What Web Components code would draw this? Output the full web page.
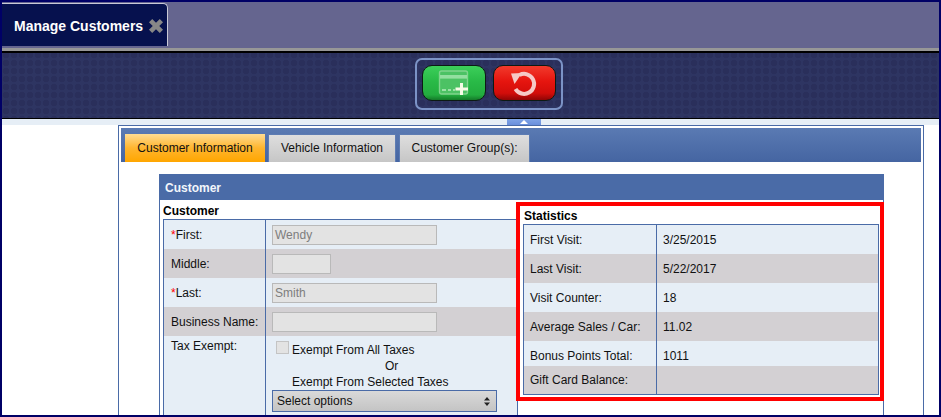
<!DOCTYPE html>
<html>
<head>
<meta charset="utf-8">
<title>Manage Customers</title>
<style>
  html, body { margin: 0; padding: 0; background: #fff; }
  body { font: 12px "Liberation Sans", Arial, sans-serif; color: #111; }
</style>
</head>
<body>
<script>
function shadowElement(name, html) {
  const template = document.createElement('template');
  template.innerHTML = html;
  customElements.define(name, class extends HTMLElement {
    constructor() {
      super();
      this.attachShadow({ mode: 'open' });
      this.shadowRoot.appendChild(template.content.cloneNode(true));
    }
  });
}

shadowElement('mc-window', `
  <style>
    :host {
      display: flex; flex-direction: column;
      width: 941px; height: 417px; box-sizing: border-box;
      border: 2px solid #000066; overflow: hidden; background: #fff;
    }
  </style>
  <slot></slot>
`);

shadowElement('mc-tabstrip', `
  <style>
    :host {
      display: block; flex: none; height: 46px; box-sizing: border-box;
      background: #65658f; padding-top: 1px;
    }
    .tab {
      display: flex; align-items: center; box-sizing: border-box;
      width: 166px; height: 43px; padding: 2px 0 0 12px;
      background: #06114e; color: #fff;
      font-weight: bold; font-size: 14px;
      border-top: 1px solid #c9c9d6; border-right: 1px solid #c9c9d6;
      border-top-right-radius: 5px;
    }
    svg { margin-left: 5px; flex: none; }
  </style>
  <div class="tab">
    <slot></slot>
    <svg width="16" height="16" viewBox="0 0 16 16"><path d="M2.6 2.6 L13.4 13.4 M13.4 2.6 L2.6 13.4" stroke="#878787" stroke-width="4.6" fill="none"/></svg>
  </div>
`);

shadowElement('mc-toolbar', `
  <style>
    :host {
      display: flex; flex: none; height: 71px; box-sizing: border-box;
      border-top: 3px solid #979797; 
      box-shadow: inset 0 1px 0 #000, inset 0 2px 0 #000;
      border-bottom: 1px solid #000;
      background-color: #2e3562;
      background-image: radial-gradient(circle at 4px 4px, #2a2f5b 3px, transparent 3.6px);
      background-size: 8px 8px;
      padding: 7px 0 0 413px;
    }
    .group {
      display: flex; gap: 7px; box-sizing: border-box;
      width: 148px; height: 52px; padding: 5px 5px;
      border: 2px solid #7c93c6; border-radius: 7px;
    }
  </style>
  <div class="group"><slot></slot></div>
`);

shadowElement('mc-button', `
  <style>
    :host {
      display: flex; align-items: center; justify-content: center;
      width: 64px; height: 36px; box-sizing: border-box;
      border: 1px solid #0c1a14; border-radius: 10px;
    }
    :host([kind="add"]) {
      background: linear-gradient(#3ccf5a 0, #29ba47 45%, #23ad3f 85%, #147a29 100%);
    }
    :host([kind="undo"]) {
      background: linear-gradient(#f23a2c 0, #e6150f 45%, #d20d0a 80%, #8f0505 100%);
    }
  </style>
  <slot></slot>
`);

shadowElement('mc-collapser', `
  <style>
    :host {
      display: block; flex: none; height: 6px; background: #e6eef6; padding-left: 505px;
    }
    .handle {
      display: flex; justify-content: center; width: 34px; height: 6px;
      background: linear-gradient(#7fa3e6, #6a8fdd);
    }
    svg { display: block; margin-top: 1px; }
  </style>
  <div class="handle"><svg width="8" height="4" viewBox="0 0 8 4"><path d="M0 4 L4 0 L8 4 Z" fill="#fff"/></svg></div>
`);

shadowElement('mc-panel', `
  <style>
    :host {
      display: block; flex: none; box-sizing: border-box;
      width: 806px; height: 300px; margin-left: 116px; padding: 2px;
      border: 1px solid #4a6ba7; border-bottom: 0;
    }
    .bar {
      display: flex; gap: 3px; align-items: flex-end; box-sizing: border-box;
      height: 34px; padding-left: 4px;
      background: linear-gradient(#5a7ab3, #4565a2);
    }
    .body { padding: 12px 0 0 38px; }
  </style>
  <div class="bar"><slot name="tabs"></slot></div>
  <div class="body"><slot></slot></div>
`);

shadowElement('mc-subtab', `
  <style>
    :host {
      display: flex; align-items: center; justify-content: center;
      box-sizing: border-box; height: 28px; padding-bottom: 2px;
      border: 1px solid #5d7cb3; border-bottom: 0;
      background: linear-gradient(#dedede, #c6c6c6);
      color: #111;
    }
    :host([active]) {
      border: 0; padding-bottom: 1px;
      background: linear-gradient(#ffdc92 0, #ffb52e 50%, #ffa600 100%);
    }
  </style>
  <slot></slot>
`);

shadowElement('mc-section', `
  <style>
    :host {
      display: block; box-sizing: border-box; width: 725px;
      border-left: 1px solid #4a6ba7; border-right: 1px solid #4a6ba7;
    }
    .head {
      height: 26px; margin: 0 -1px; padding-left: 6px;
      background: #4a6ba7; color: #f2f6fb;
      font-weight: bold; line-height: 28px;
    }
    .body { display: flex; align-items: flex-start; }
  </style>
  <div class="head"><slot name="title"></slot></div>
  <div class="body"><slot></slot></div>
`);

shadowElement('mc-group', `
  <style>
    :host { display: block; flex: none; box-sizing: border-box; width: 355px; margin-left: 3px; }
    .title { height: 19px; font-weight: bold; line-height: 23px; color: #000; }
  </style>
  <div class="title"><slot name="title"></slot></div>
  <slot></slot>
`);

shadowElement('mc-highlight', `
  <style>
    :host {
      display: block; flex: none; position: relative; box-sizing: border-box;
      width: 368px; height: 199px; margin: 2px 0 0 -2px; padding: 0 1px 0 3px;
      border: 4px solid #ff0000; background: #fff;
    }
    .title { height: 18px; padding-left: 1px; font-weight: bold; line-height: 20px; color: #000; }
  </style>
  <div class="title"><slot name="title"></slot></div>
  <slot></slot>
`);

shadowElement('mc-table', `
  <style>
    :host { display: block; box-sizing: border-box; border: 1px solid #4a6ba7; }
    :host([open-bottom]) { border-bottom: 0; }
  </style>
  <slot></slot>
`);

shadowElement('mc-row', `
  <style>
    :host {
      display: grid; grid-template-columns: var(--label-w) 1fr;
      height: var(--h, 29px); background: #e6eef6; color: #111;
    }
    :host([tone="gray"]) { background: #d3d0d3; }
    .label {
      display: flex; align-items: center; box-sizing: border-box;
      padding: var(--pt, 0) 0 0 var(--label-pad, 6px);
      border-right: 1px solid #4a6ba7;
    }
    .value {
      display: flex; align-items: center;
      padding: var(--pt, 0) 0 0 6px; min-width: 0;
    }
    :host([top]) .label { align-items: flex-start; padding-top: 3px; line-height: 14px; }
    :host([top]) .value { align-items: flex-start; }
  </style>
  <div class="label"><slot name="label"></slot></div>
  <div class="value"><slot></slot></div>
`);

shadowElement('mc-req', `<style>:host { display: inline; color: #ff0000; }</style>*`);

shadowElement('mc-field', `
  <style>
    :host {
      display: block; box-sizing: border-box; width: var(--w, 165px); height: 20px;
      padding-left: 2px; background: #e3e3e3; border: 1px solid #b9b9b9;
      color: #7d7d7d; line-height: 18px;
    }
  </style>
  <slot></slot>
`);

shadowElement('mc-tax-exempt', `
  <style>
    :host { display: block; padding-top: 6px; line-height: 16px; color: #111; }
    .all { display: flex; height: 16px; }
    .box {
      flex: none; box-sizing: border-box; width: 13px; height: 13px;
      margin: -1px 3px 0 4px;
      background: #e3e3e3; border: 1px solid #c4c4c4;
    }
    .or { padding-left: 113px; }
    .sel { padding-left: 20px; }
  </style>
  <div class="all"><div class="box"></div><span><slot name="all"></slot></span></div>
  <div class="or"><slot name="or"></slot></div>
  <div class="sel"><slot name="selected"></slot></div>
  <slot></slot>
`);

shadowElement('mc-select', `
  <style>
    :host {
      display: flex; align-items: center; justify-content: space-between;
      box-sizing: border-box; width: 225px; height: 22px;
      padding: 0 6px 0 4px; border: 1px solid #4a6ba7;
      background: linear-gradient(#d9d9d9, #c4c4c4); color: #111;
    }
    svg { display: block; }
  </style>
  <slot></slot>
  <svg width="6" height="9" viewBox="0 0 6 9"><path d="M3 0 L6 3.5 L0 3.5 Z M3 9 L0 5.5 L6 5.5 Z" fill="#222"/></svg>
`);
</script>

<mc-window>
  <mc-tabstrip>Manage Customers</mc-tabstrip>
  <mc-toolbar>
    <mc-button kind="add">
      <svg width="32" height="28" viewBox="0 0 32 28">
        <rect x="1.5" y="2" width="28" height="23" rx="2" fill="#4cc264" stroke="#80d48d" stroke-width="1.4"/>
        <rect x="2" y="6" width="27" height="3.6" fill="#93dfa0"/>
        <path d="M4 21 H8 M10 21 H13 M15 21 H17" stroke="#b5ecbd" stroke-width="1.4" fill="none"/>
        <path d="M23.5 14 V26 M17.5 20 H30" stroke="#f6fbe6" stroke-width="3" fill="none"/>
      </svg>
    </mc-button>
    <mc-button kind="undo">
      <svg width="30" height="28" viewBox="0 0 30 28">
        <path d="M10.5 6 A10 10 0 1 1 6.5 20" stroke="#f6c9c6" stroke-width="4" fill="none"/>
        <path d="M2 4.5 L13 4 L5.5 15 Z" fill="#f6c9c6"/>
      </svg>
    </mc-button>
  </mc-toolbar>
  <mc-collapser></mc-collapser>
  <mc-panel>
    <mc-subtab slot="tabs" active style="width:140px">Customer Information</mc-subtab>
    <mc-subtab slot="tabs" style="width:128px">Vehicle Information</mc-subtab>
    <mc-subtab slot="tabs" style="width:131px">Customer Group(s):</mc-subtab>

    <mc-section>
      <span slot="title">Customer</span>

      <mc-group>
        <span slot="title">Customer</span>
        <mc-table open-bottom style="--label-w:102px;--label-pad:7px">
          <mc-row><span slot="label"><mc-req></mc-req>First:</span><mc-field>Wendy</mc-field></mc-row>
          <mc-row tone="gray"><span slot="label">Middle:</span><mc-field style="--w:59px"></mc-field></mc-row>
          <mc-row><span slot="label"><mc-req></mc-req>Last:</span><mc-field>Smith</mc-field></mc-row>
          <mc-row tone="gray"><span slot="label">Business Name:</span><mc-field></mc-field></mc-row>
          <mc-row top style="--h:80px">
            <span slot="label">Tax Exempt:</span>
            <mc-tax-exempt>
              <span slot="all">Exempt From All Taxes</span>
              <span slot="or">Or</span>
              <span slot="selected">Exempt From Selected Taxes</span>
              <mc-select>Select options</mc-select>
            </mc-tax-exempt>
          </mc-row>
        </mc-table>
      </mc-group>

      <mc-highlight>
        <span slot="title">Statistics</span>
        <mc-table style="--label-w:133px;height:171px">
          <mc-row><span slot="label">First Visit:</span>3/25/2015</mc-row>
          <mc-row tone="gray"><span slot="label">Last Visit:</span>5/22/2017</mc-row>
          <mc-row><span slot="label">Visit Counter:</span>18</mc-row>
          <mc-row tone="gray"><span slot="label">Average Sales / Car:</span>11.02</mc-row>
          <mc-row style="--h:25px;--pt:4px"><span slot="label">Bonus Points Total:</span>1011</mc-row>
          <mc-row tone="gray" style="--h:28px"><span slot="label">Gift Card Balance:</span></mc-row>
        </mc-table>
      </mc-highlight>
    </mc-section>
  </mc-panel>
</mc-window>
</body>
</html>
